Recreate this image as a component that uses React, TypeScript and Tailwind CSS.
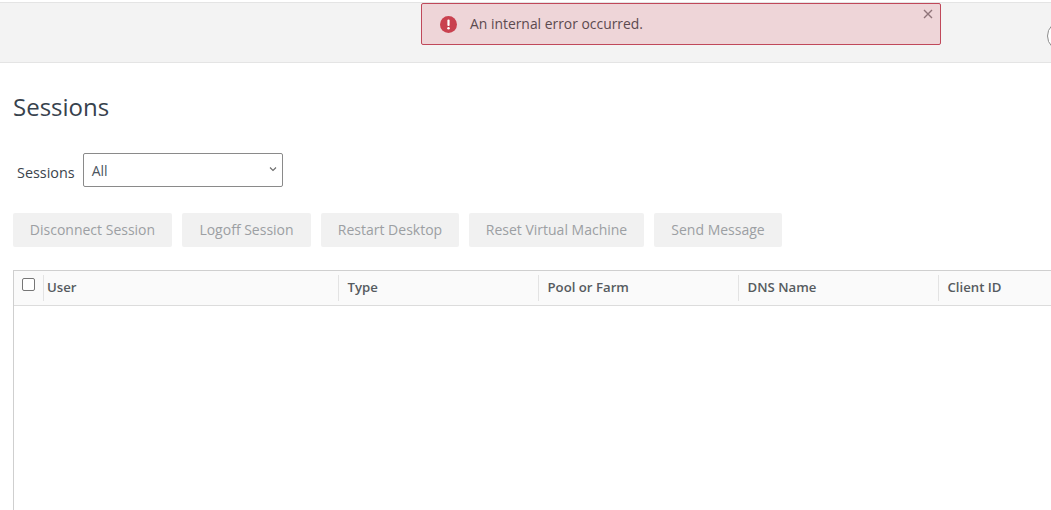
import React from 'react';

const actions = [
  { label: 'Disconnect Session', width: 'w-[159px]' },
  { label: 'Logoff Session', width: 'w-[129px]' },
  { label: 'Restart Desktop', width: 'w-[138px]' },
  { label: 'Reset Virtual Machine', width: 'w-[175px]' },
  { label: 'Send Message', width: 'w-[128px]' },
];

const columns = ['Type', 'Pool or Farm', 'DNS Name', 'Client ID'];

export default function App() {
  return (
    <div className="relative h-[510px] w-[1051px] overflow-hidden bg-white font-['Open_Sans',sans-serif] text-[14px] text-[#3c444d]">
      {/* top bar */}
      <div className="mt-[2px] flex h-[61px] items-center overflow-hidden border-y border-[#e4e4e4] bg-[#f3f3f3] pl-[1047px]">
        <div className="mt-[6px] h-[30px] w-[30px] shrink-0 rounded-full border border-[#8d8d8d] bg-white" />
      </div>

      {/* error alert */}
      <div className="absolute left-[421px] top-[3px] flex h-[42px] w-[520px] items-center rounded-[2px] border border-[#c0485a] bg-[#eed5d8] pl-[18px]">
        <svg width="17" height="17" viewBox="0 0 17 17" className="shrink-0">
          <circle cx="8.5" cy="8.5" r="8.5" fill="#c9414f" />
          <rect x="7.4" y="3.6" width="2.2" height="6.4" rx="1" fill="#fff" />
          <circle cx="8.5" cy="12.3" r="1.25" fill="#fff" />
        </svg>
        <span className="ml-[13px] text-[13.9px] text-[#5c4a4f]">An internal error occurred.</span>
        <svg width="10" height="10" viewBox="0 0 10 10" className="absolute right-[7px] top-[5px]">
          <path d="M1 1l8 8M9 1l-8 8" stroke="#8f7479" strokeWidth="1.4" fill="none" />
        </svg>
      </div>

      <div className="pl-[13px]">
        <h1 className="mt-[26px] text-[24px] leading-[36px] font-normal text-[#37424d]">Sessions</h1>

        <div className="mt-[28px] flex items-center">
          <label className="ml-[4px] mt-[5px] text-[14.4px] text-[#3c444d]">Sessions</label>
          <div className="ml-[8px] flex h-[34px] w-[200px] items-center justify-between rounded-[2px] border border-[#8a8a8a] bg-white pl-[8px] pr-[5px] text-[14px] text-[#4b5560]">
            <span>All</span>
            <svg width="8" height="6" viewBox="0 0 8 6" className="-mt-[2px]">
              <path d="M1 1.5l3 3 3-3" stroke="#6b6b6b" strokeWidth="1.1" fill="none" />
            </svg>
          </div>
        </div>

        <div className="mt-[26px] flex gap-[10px]">
          {actions.map((a) => (
            <button
              key={a.label}
              disabled
              className={`h-[34px] ${a.width} rounded-[2px] bg-[#f1f1f1] pb-[2px] text-center text-[14px] text-[#9c9fa3]`}
            >
              {a.label}
            </button>
          ))}
        </div>

        {/* table */}
        <div className="mt-[23px] h-[240px] w-[1100px] border-l border-t border-[#cfcfcf]">
          <div className="flex h-[35px] items-center border-b border-[#dcdcdc] bg-[#fafafa] pb-[1px] text-[13.2px] font-[550] text-[#565b5f]">
            <div className="flex h-[26px] w-[30px] shrink-0 items-start border-r border-[#e3e3e3] pl-[8px]">
              <div className="mt-[3px] h-[13px] w-[13px] rounded-[2px] border border-[#767676] bg-white" />
            </div>
            <div className="flex h-[26px] w-[295px] shrink-0 items-center border-r border-[#e3e3e3] pl-[3px]">User</div>
            {columns.map((c) => (
              <div key={c} className="flex h-[26px] w-[200px] shrink-0 items-center border-r border-[#e3e3e3] pl-[8.5px]">
                {c}
              </div>
            ))}
          </div>
        </div>
      </div>
    </div>
  );
}
